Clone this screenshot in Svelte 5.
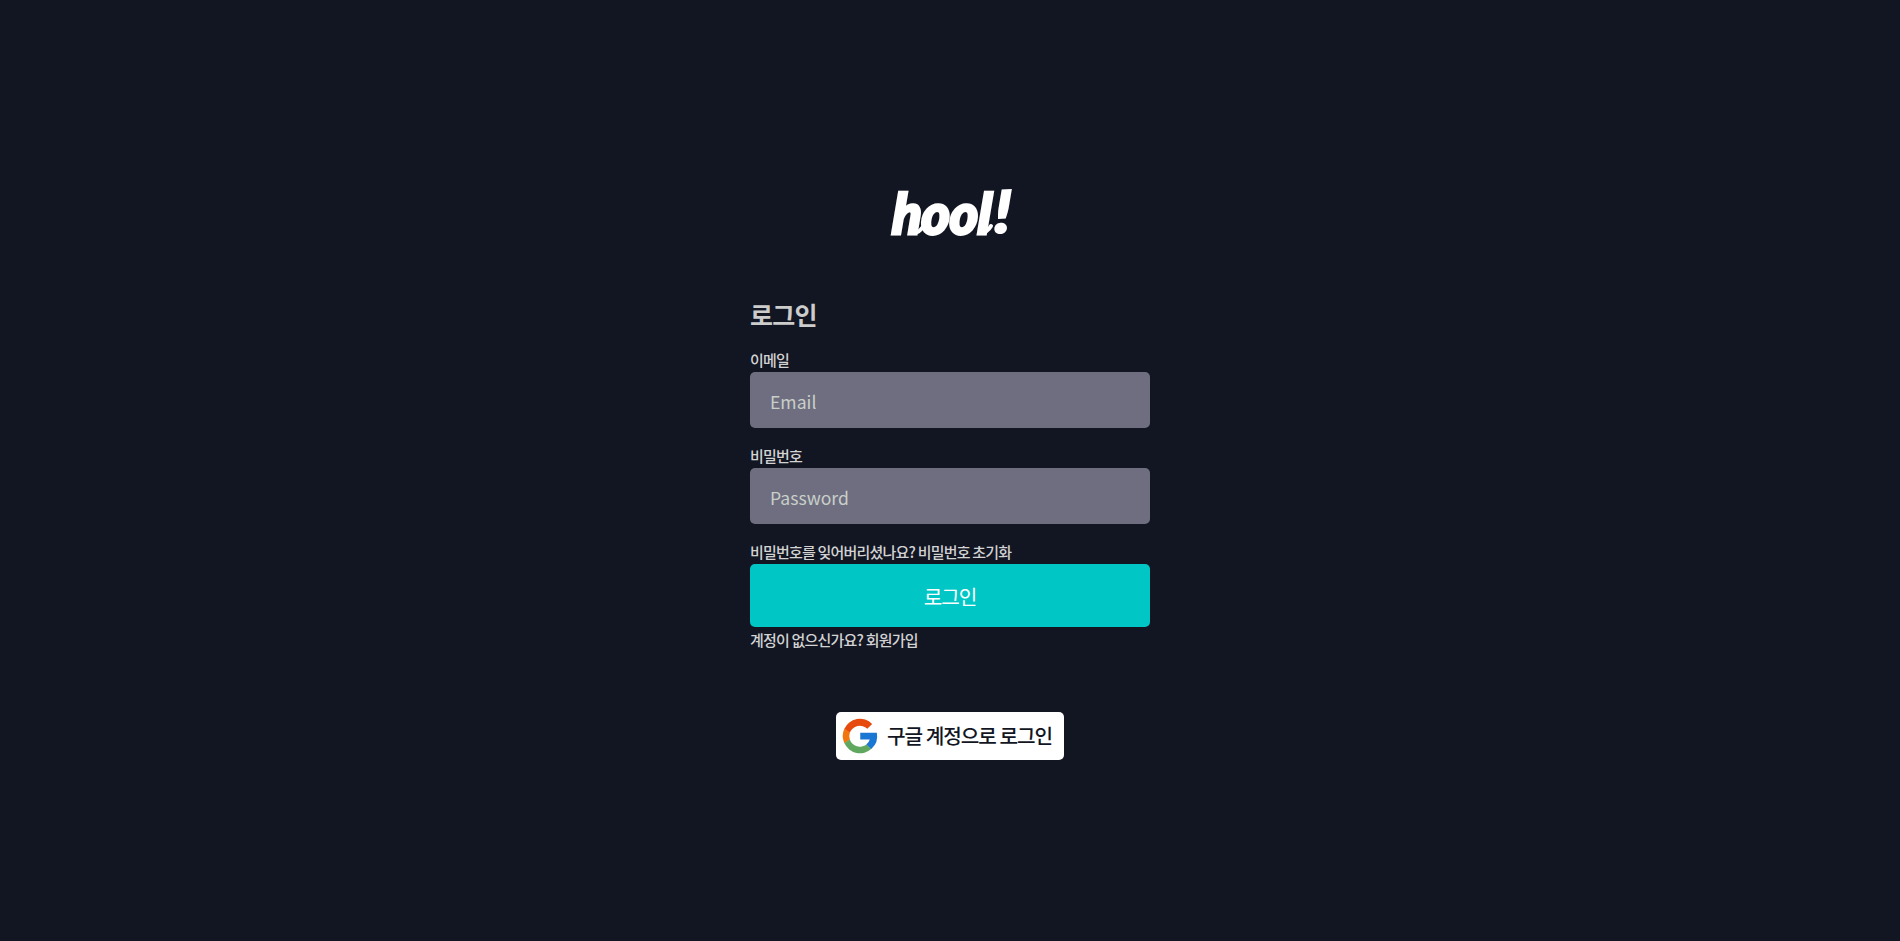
<script>
  let email = $state('');
  let password = $state('');
</script>

<main>
  <svg class="logo" viewBox="0 0 124 54" role="img" aria-label="hool!">
    <g transform="skewX(-3)">
      <text class="word" x="6" y="49" textLength="99" lengthAdjust="spacingAndGlyphs">hool</text>
    </g>
    <g transform="translate(105.5 48) skewX(-5) rotate(-3) scale(0.95 1.04)">
      <text class="word mark" x="0" y="0" textLength="18" lengthAdjust="spacingAndGlyphs">!</text>
    </g>
    <path class="swash" d="M24 47.5Q30 49 34 43M92 47.5Q99 48 103 41" />
  </svg>

  <form onsubmit={(e) => e.preventDefault()}>
    <h1>로그인</h1>
    <label for="email">이메일</label>
    <input id="email" type="email" placeholder="Email" bind:value={email} />
    <label for="password">비밀번호</label>
    <input id="password" type="password" placeholder="Password" bind:value={password} />
    <p class="reset">비밀번호를 잊어버리셨나요? <a href="#reset">비밀번호 초기화</a></p>
    <button class="submit" type="submit">로그인</button>
    <p>계정이 없으신가요? <a href="#join">회원가입</a></p>
  </form>

  <button class="google" type="button">
    <svg viewBox="0 0 48 48" aria-hidden="true">
      <path fill="#e64a0c" d="M5.1 15.6A20.5 20.5 0 0 1 38.6 9.6L32.8 15.4A13 13 0 0 0 11.7 20.1Z" />
      <path fill="#f2760f" d="M5.2 15.4A20.5 20.5 0 0 0 5.2 32.6L11.9 28.4A13 13 0 0 1 11.8 19.8Z" />
      <path fill="#60a860" d="M5.2 32.4A20.5 20.5 0 0 0 37.8 39.4L31.8 34.1A12.6 12.6 0 0 1 11.8 28.2Z" />
      <path fill="#1976d2" d="M24.3 20.2H44.2A20.5 20.5 0 0 1 37.6 39.6L31.6 34.3A12.6 12.6 0 0 0 35.7 28.2H24.3Z" />
    </svg>
    <span>구글 계정으로 로그인</span>
  </button>
</main>

<style>
  :global(body) {
    margin: 0;
    background: #121623;
  }

  main {
    box-sizing: border-box;
    min-height: 941px;
    padding-top: 185px;
    display: flex;
    flex-direction: column;
    align-items: center;
    font-family: 'Noto Sans CJK KR', 'Noto Sans', sans-serif;
    letter-spacing: -0.05em;
    color: #d3d3d3;
  }

  .logo {
    width: 124px;
    height: 54px;
    overflow: visible;
  }

  .word {
    font: italic 900 56px Lato, sans-serif;
    letter-spacing: 0;
    fill: #fff;
    stroke: #fff;
    stroke-width: 3px;
    stroke-linejoin: miter;
  }

  .mark {
    stroke-width: 2px;
  }

  .swash {
    fill: none;
    stroke: #fff;
    stroke-width: 4px;
    stroke-linecap: round;
  }

  form {
    width: 400px;
    margin-top: 57px;
    display: flex;
    flex-direction: column;
  }

  h1 {
    margin: -1px 0 16px;
    font-size: 25px;
    line-height: 38px;
    font-weight: 700;
    color: #cccccc;
  }

  label,
  p {
    margin: 0;
    height: 23px;
    font-size: 15px;
    line-height: 22px;
    font-weight: 500;
  }

  .submit + p {
    margin-top: 2px;
  }

  a {
    color: inherit;
    text-decoration: none;
  }

  input,
  .submit {
    box-sizing: border-box;
    width: 400px;
    border: 0;
    border-radius: 5px;
    font-family: inherit;
  }

  input {
    height: 56px;
    margin-bottom: 17px;
    padding: 2px 20px 0;
    background: #6e6e80;
    color: #d3d3d3;
    font-size: 17.6px;
    outline: none;
  }

  input::placeholder {
    color: #c8cfc8;
    opacity: 1;
  }

  .submit {
    height: 63px;
    padding: 1px 0 0;
    background: #00c7c5;
    color: #fff;
    font-size: 20.2px;
    font-weight: 400;
    letter-spacing: -0.05em;
  }

  .google {
    width: 228px;
    height: 48px;
    margin-top: 60px;
    padding: 0 0 0 4px;
    border: 0;
    border-radius: 5px;
    display: flex;
    align-items: center;
    gap: 7px;
    background: #fff;
    color: #121623;
    font-family: inherit;
    font-size: 20.2px;
    font-weight: 500;
    letter-spacing: -0.05em;
    white-space: nowrap;
  }

  .google svg {
    width: 40px;
    height: 40px;
    flex: none;
  }

  .google span {
    margin-top: -1px;
  }
</style>
